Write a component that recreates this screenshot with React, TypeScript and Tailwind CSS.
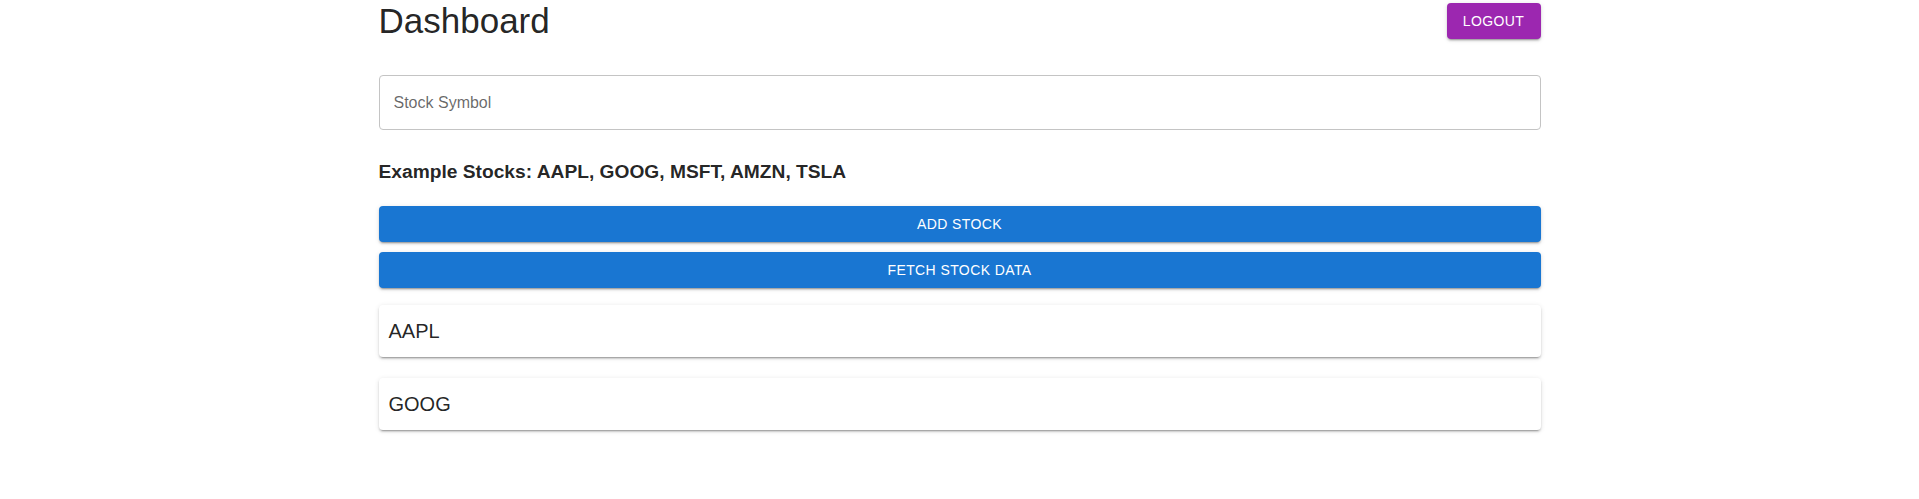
const btnShadow =
  "shadow-[0px_3px_1px_-2px_rgba(0,0,0,0.2),0px_2px_2px_0px_rgba(0,0,0,0.14),0px_1px_5px_0px_rgba(0,0,0,0.12)]";

const StockCard = ({ symbol }: { symbol: string }) => {
  return (
    <div className={`w-full h-[52px] flex items-center px-[10px] bg-white rounded-[4px] ${btnShadow}`}>
      <span className="text-[20px] text-[rgba(0,0,0,0.87)]">{symbol}</span>
    </div>
  );
};

const App = () => {
  return (
    <div className="min-h-screen bg-white font-['Liberation_Sans',Arial,sans-serif] text-[rgba(0,0,0,0.87)]">
      <div className="w-[1162px] mx-auto flex flex-col">
        <div className="flex justify-between items-start">
          <h1 className="text-[35px] leading-[42px] font-normal">Dashboard</h1>
          <button
            className={`mt-[3px] h-[36px] w-[94px] rounded-[4px] bg-[#9c27b0] text-white text-[14px] font-medium uppercase tracking-[0.4px] ${btnShadow}`}
          >
            Logout
          </button>
        </div>

        <div className="mt-[33px] h-[55px] flex items-center px-[14px] border border-[#c4c4c4] rounded-[4px]">
          <input
            placeholder="Stock Symbol"
            className="w-full outline-none text-[16px] placeholder:text-[rgba(0,0,0,0.6)]"
          />
        </div>

        <h2 className="mt-[30px] text-[19.2px] leading-[24px] font-bold">
          Example Stocks: AAPL, GOOG, MSFT, AMZN, TSLA
        </h2>

        <button
          className={`mt-[22px] h-[36px] w-full rounded-[4px] bg-[#1976d2] text-white text-[14px] font-medium uppercase tracking-[0.4px] ${btnShadow}`}
        >
          Add Stock
        </button>
        <button
          className={`mt-[10px] h-[36px] w-full rounded-[4px] bg-[#1976d2] text-white text-[14px] font-medium uppercase tracking-[0.4px] ${btnShadow}`}
        >
          Fetch Stock Data
        </button>

        <div className="mt-[17px] flex flex-col gap-[21px]">
          <StockCard symbol="AAPL" />
          <StockCard symbol="GOOG" />
        </div>
      </div>
    </div>
  );
};

export default App;
